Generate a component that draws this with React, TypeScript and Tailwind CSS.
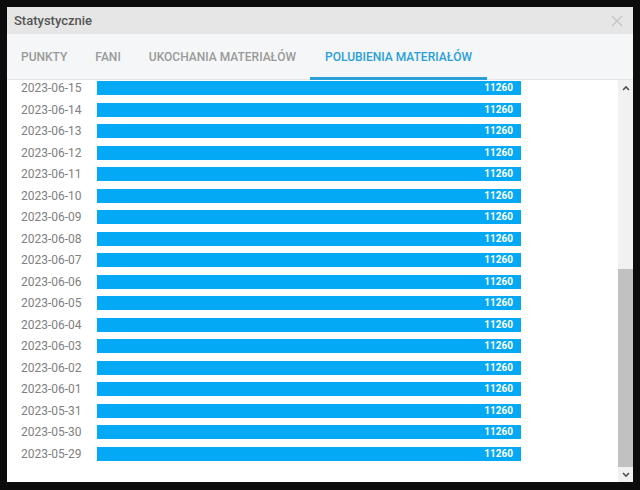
import React from "react";

const tabs = ["PUNKTY", "FANI", "UKOCHANIA MATERIAŁÓW", "POLUBIENIA MATERIAŁÓW"];

const dates = [
  "2023-06-15",
  "2023-06-14",
  "2023-06-13",
  "2023-06-12",
  "2023-06-11",
  "2023-06-10",
  "2023-06-09",
  "2023-06-08",
  "2023-06-07",
  "2023-06-06",
  "2023-06-05",
  "2023-06-04",
  "2023-06-03",
  "2023-06-02",
  "2023-06-01",
  "2023-05-31",
  "2023-05-30",
  "2023-05-29",
];

const App = () => {
  const active = 3;

  return (
    <div
      className="w-[640px] h-[490px] bg-[#0c0c0c] p-[7px] overflow-hidden"
      style={{ fontFamily: "Roboto, 'Liberation Sans', sans-serif" }}
    >
      <div className="w-[626px] h-[475px] bg-white flex flex-col">
        {/* Header */}
        <div className="h-[27px] bg-[#e6e6e6] flex items-center justify-between pl-[7px] pr-[10px] shrink-0">
          <span className="text-[13px] font-medium text-[#555]">Statystycznie</span>
          <svg width="12" height="12" viewBox="0 0 12 12" className="mt-px">
            <path d="M1 1L11 11M11 1L1 11" stroke="#c4c4c4" strokeWidth="1.2" />
          </svg>
        </div>

        {/* Tabs */}
        <div className="h-[46px] bg-[#f4f6f7] border-b border-[#e2e4e6] flex shrink-0">
          {tabs.map((t, i) => (
            <div
              key={t}
              className={
                i === active
                  ? "px-[15px] flex items-center text-[12px] font-medium text-[#2aa0d8] border-b-[3px] border-[#2aa0d8] pt-[3px] mb-[-1px]"
                  : "px-[14px] flex items-center text-[12px] font-medium text-[#9a9a9a]"
              }
            >
              {t}
            </div>
          ))}
        </div>

        {/* Content + scrollbar */}
        <div className="flex flex-1 min-h-0">
          <div className="flex-1 overflow-hidden">
            <div className="mt-[-2.5px]">
              {dates.map((d) => (
                <div key={d} className="h-[21.5px] flex items-center pl-[14px]">
                  <span className="w-[76px] text-[12px] text-[#808080]">{d}</span>
                  <div className="w-[424px] h-[14px] bg-[#03a9f4] flex items-center justify-end pr-[8px]">
                    <span className="text-[10px] font-bold text-white leading-none">11260</span>
                  </div>
                </div>
              ))}
            </div>
          </div>
          <div className="w-[15px] bg-[#f1f1f1] flex flex-col">
            <div className="h-[15px] flex items-center justify-center">
              <svg width="8" height="6" viewBox="0 0 8 6">
                <path d="M1 5L4 2L7 5" stroke="#505050" strokeWidth="1.6" fill="none" />
              </svg>
            </div>
            <div className="flex-1" />
            <div className="h-[198px] bg-[#c1c1c1]" />
            <div className="h-[15px] flex items-center justify-center">
              <svg width="8" height="6" viewBox="0 0 8 6">
                <path d="M1 1L4 4L7 1" stroke="#505050" strokeWidth="1.6" fill="none" />
              </svg>
            </div>
          </div>
        </div>
      </div>
    </div>
  );
};

export default App;
